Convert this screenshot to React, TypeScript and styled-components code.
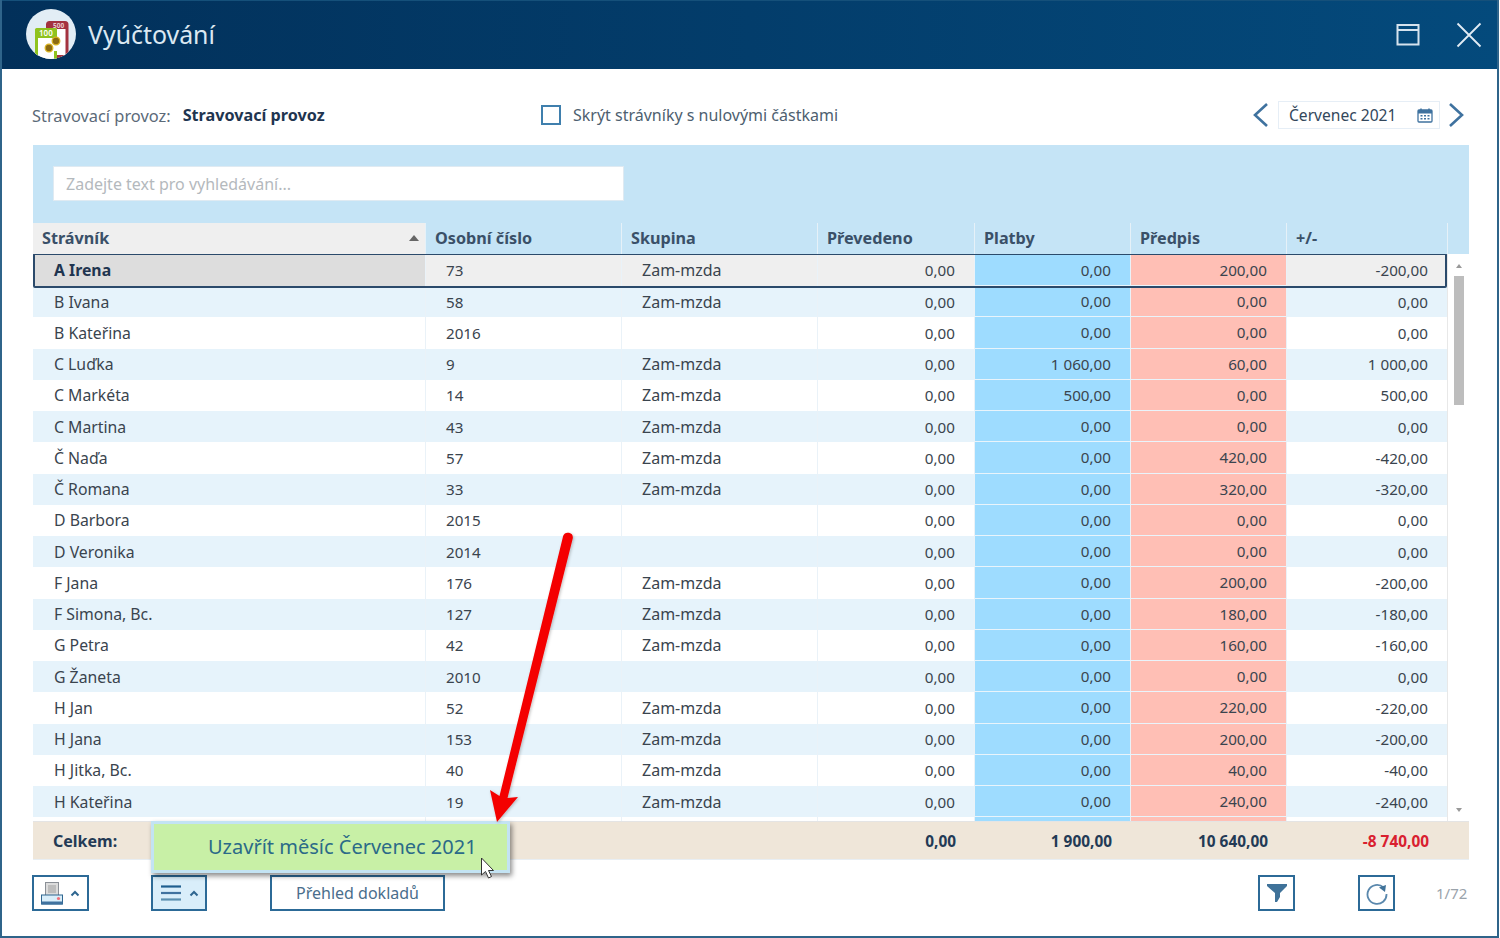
import React from 'react';
import styled, { createGlobalStyle } from 'styled-components';

const Global = createGlobalStyle`
  html, body { margin: 0; padding: 0; background: #fff; }
  body { font-family: "Noto Sans", "Open Sans", "Liberation Sans", sans-serif; font-size: 16px; color: #33475b; }
  * { box-sizing: border-box; }
`;

const COLS = '392px 196px 196px 157px 156px 156px 161px';

const Win = styled.div`
  position: relative;
  width: 1499px;
  height: 938px;
  border: 2px solid #2f648a;
  border-top: none;
  background: #fff;
  display: flex;
  flex-direction: column;
  overflow: hidden;
`;
const TitleBar = styled.header`
  height: 69px;
  flex: none;
  display: flex;
  align-items: center;
  padding: 0 13px 0 24px;
  background: linear-gradient(90deg, #02305a 0%, #044a7c 100%);
  border-top: 1px solid #15507a;
`;
const Logo = styled.svg`
  width: 50px;
  height: 50px;
  flex: none;
  margin-top: -2px;
`;
const Title = styled.h1`
  margin: 0 0 2px 12px;
  font-size: 24.9px;
  font-weight: 400;
  color: #dbe8f2;
  flex: 1;
`;
const WinBtn = styled.svg`
  width: 30px;
  height: 30px;
  margin-left: 31px;
  flex: none;
`;
const Content = styled.main`
  flex: 1;
  display: flex;
  flex-direction: column;
  padding: 0 28px 0 31px;
  min-height: 0;
`;
const Toolbar = styled.div`
  height: 76px;
  flex: none;
  display: grid;
  grid-template-columns: 509px 1fr auto;
  align-items: center;
  padding-top: 16px;
  padding-right: 4px;
  margin-left: -1px;
`;
const Provider = styled.div`
  display: flex;
  gap: 12px;
  color: #5b6a78;
  font-size: 16.4px;
`;
const ProviderName = styled.b`
  color: #1f3550;
  font-weight: 700;
  font-size: 16.2px;
`;
const CheckLabel = styled.label`
  display: flex;
  align-items: center;
  gap: 12px;
  color: #4e5f70;
`;
const CheckBox = styled.span`
  width: 20px;
  height: 20px;
  border: 2px solid #3f7fad;
  background: #fff;
`;
const DateNav = styled.div`
  display: flex;
  align-items: center;
  gap: 7px;
`;
const Chevron = styled.svg`
  width: 18px;
  height: 28px;
  flex: none;
`;
const BackChevron = styled(Chevron)`
  margin-right: 1px;
`;
const DateBox = styled.div`
  width: 162px;
  height: 28px;
  border: 1px solid #e6eef6;
  background: #fff;
  display: flex;
  align-items: center;
  justify-content: space-between;
  padding: 0 6px 0 10px;
  color: #33475b;
  font-size: 15.6px;
`;
const SearchPanel = styled.div`
  height: 78px;
  flex: none;
  background: #c5e4f6;
  padding: 22px 20px;
`;
const SearchInput = styled.input`
  display: block;
  width: 571px;
  height: 35px;
  margin-top: -1px;
  border: 1px solid #dfeaf2;
  background: #fff;
  padding: 0 12px;
  font: inherit;
  &::placeholder { color: #b4b9bd; opacity: 1; }
`;
const HeadRow = styled.div`
  display: grid;
  grid-template-columns: ${COLS} 22px;
  height: 30.5px;
  flex: none;
  background: #c5e4f6;
`;
const HeadCell = styled.div<{ $sorted?: boolean }>`
  display: flex;
  align-items: center;
  justify-content: space-between;
  padding: 0 10px 0 9px;
  font-weight: 700;
  font-size: 16.2px;
  color: #3a5068;
  border-left: 1px solid #e6f1f8;
  background: ${p => (p.$sorted ? '#efefef' : 'transparent')};
  &:first-child { border-left: none; padding-left: 9px; }
`;
const SortMark = styled.span`
  width: 0;
  height: 0;
  border-left: 5px solid transparent;
  border-right: 5px solid transparent;
  border-bottom: 6px solid #666;
  margin-right: -4px;
`;
const BodyWrap = styled.div`
  height: 567.5px;
  flex: none;
  display: flex;
  overflow: hidden;
  background: #fff;
`;
const Rows = styled.div`
  width: 1414px;
  flex: none;
  padding-top: 1.25px;
`;
const Row = styled.div<{ $alt: boolean; $selected?: boolean }>`
  position: relative;
  display: grid;
  grid-template-columns: ${COLS};
  height: 31.25px;
  background: ${p => (p.$selected ? '#efefef' : p.$alt ? '#e6f3fb' : '#fff')};
  ${p => p.$selected && `
    z-index: 1;
    &::after {
      content: '';
      position: absolute;
      inset: -1.500px 0 -1.500px 0;
      border: 2.500px solid #2b4a6b;
      border-radius: 2px;
      pointer-events: none;
    }
  `}
`;
const Cell = styled.div<{ $kind?: 'name' | 'pay' | 'due' | 'group'; $right?: boolean; $selected?: boolean }>`
  display: flex;
  align-items: center;
  justify-content: ${p => (p.$right ? 'flex-end' : 'flex-start')};
  padding: ${p => (p.$right ? '0 19px 0 0' : '0 0 0 20px')};
  color: #3a444e;
  white-space: nowrap;
  font-size: ${p => (p.$kind === 'name' ? 15.8 : p.$kind === 'group' ? 16 : 15.2)}px;
  border-left: 1px solid #eaf2f8;
  border-bottom: ${p => (p.$kind === 'pay' || p.$kind === 'due' ? '1px solid #e9f4fb' : 'none')};
  &:first-child { border-left: none; padding-left: 21px; }
  background: ${p => {
    if (p.$kind === 'pay') return '#9edcff';
    if (p.$kind === 'due') return '#ffbfb5';
    if (p.$kind === 'name' && p.$selected) return '#dddddd';
    return 'transparent';
  }};
  font-weight: ${p => (p.$kind === 'name' && p.$selected ? 700 : 400)};
  ${p => p.$kind === 'name' && p.$selected && 'color: #1f3550;'}
`;
const Scrollbar = styled.div`
  width: 22px;
  flex: none;
  display: flex;
  flex-direction: column;
  align-items: center;
  padding: 10px 0 6px 1px;
  border-left: 1px solid #e8e8e8;
`;
const ScrollUp = styled.span`
  width: 0;
  height: 0;
  border-left: 3px solid transparent;
  border-right: 3px solid transparent;
  border-bottom: 4px solid #999;
`;
const ScrollDown = styled.span`
  width: 0;
  height: 0;
  margin-top: auto;
  margin-bottom: 3px;
  border-left: 3px solid transparent;
  border-right: 3px solid transparent;
  border-top: 4px solid #999;
`;
const ScrollThumb = styled.div`
  width: 10px;
  height: 129px;
  margin-top: 8px;
  background: #bdbdbd;
`;
const TotalRow = styled.div`
  display: grid;
  grid-template-columns: ${COLS} 22px;
  height: 39px;
  flex: none;
  padding-top: 1px;
  background: #efe6d9;
  border-bottom: 1px solid #e8eef3;
  border-top: 1px solid #e4e4e4;
  font-weight: 700;
  font-size: 15.4px;
  color: #233a55;
`;
const TotalCell = styled.div<{ $first?: boolean; $negative?: boolean }>`
  display: flex;
  align-items: center;
  justify-content: ${p => (p.$first ? 'flex-start' : 'flex-end')};
  padding: ${p => (p.$first ? '0 0 0 20px' : '0 18px 0 0')};
  font-size: ${p => (p.$first ? '16px' : 'inherit')};
  color: ${p => (p.$negative ? '#d9202f' : 'inherit')};
`;
const BottomBar = styled.div`
  display: flex;
  align-items: center;
  height: 36px;
  margin-top: 15px;
  margin-left: -1px;
  flex: none;
`;
const IconBtn = styled.button<{ $w: number; $active?: boolean; $gap?: number }>`
  width: ${p => p.$w}px;
  height: 36px;
  margin-left: ${p => p.$gap ?? 0}px;
  border: 2px solid #2c6a97;
  background: ${p => (p.$active ? '#d9eefa' : '#fff')};
  display: flex;
  align-items: center;
  justify-content: center;
  gap: 7px;
  padding: 0;
  flex: none;
`;
const TextBtn = styled.button`
  width: 175px;
  height: 36px;
  margin-left: 63px;
  border: 2px solid #2c6a97;
  background: #fff;
  font: inherit;
  color: #4a6e8c;
  padding: 0;
  flex: none;
`;
const Spacer = styled.div`
  flex: 1;
`;
const Pager = styled.span`
  margin-left: 41px;
  width: 33px;
  color: #9aa3ab;
  font-size: 15px;
  white-space: nowrap;
`;
const Popup = styled.div`
  position: absolute;
  left: 149px;
  top: 821px;
  width: 359px;
  height: 52px;
  background: #c8f0a6;
  border: 3px solid #c3e3f3;
  box-shadow: 2px 3px 5px rgba(0, 0, 0, 0.45);
  display: flex;
  align-items: center;
  padding: 0 0 2px 54px;
  font-size: 20px;
  color: #2b6a88;
  white-space: nowrap;
`;
const Overlay = styled.svg`
  position: absolute;
  left: -2px;
  top: 0;
  width: 1500px;
  height: 938px;
  pointer-events: none;
`;

type R = [string, string, string, string, string, string];
const data: R[] = [
  ['A Irena', '73', 'Zam-mzda', '0,00', '200,00', '-200,00'],
  ['B Ivana', '58', 'Zam-mzda', '0,00', '0,00', '0,00'],
  ['B Kateřina', '2016', '', '0,00', '0,00', '0,00'],
  ['C Luďka', '9', 'Zam-mzda', '1 060,00', '60,00', '1 000,00'],
  ['C Markéta', '14', 'Zam-mzda', '500,00', '0,00', '500,00'],
  ['C Martina', '43', 'Zam-mzda', '0,00', '0,00', '0,00'],
  ['Č Naďa', '57', 'Zam-mzda', '0,00', '420,00', '-420,00'],
  ['Č Romana', '33', 'Zam-mzda', '0,00', '320,00', '-320,00'],
  ['D Barbora', '2015', '', '0,00', '0,00', '0,00'],
  ['D Veronika', '2014', '', '0,00', '0,00', '0,00'],
  ['F Jana', '176', 'Zam-mzda', '0,00', '200,00', '-200,00'],
  ['F Simona, Bc.', '127', 'Zam-mzda', '0,00', '180,00', '-180,00'],
  ['G Petra', '42', 'Zam-mzda', '0,00', '160,00', '-160,00'],
  ['G Žaneta', '2010', '', '0,00', '0,00', '0,00'],
  ['H Jan', '52', 'Zam-mzda', '0,00', '220,00', '-220,00'],
  ['H Jana', '153', 'Zam-mzda', '0,00', '200,00', '-200,00'],
  ['H Jitka, Bc.', '40', 'Zam-mzda', '0,00', '40,00', '-40,00'],
  ['H Kateřina', '19', 'Zam-mzda', '0,00', '240,00', '-240,00'],
];

const Caret = () => (
  <svg width="10" height="7" viewBox="0 0 10 7"><path d="M1.500 5.500 5 2l3.500 3.500" fill="none" stroke="#2f6690" strokeWidth="2" /></svg>
);

export default function App() {
  return (
    <>
      <Global />
      <Win>
        <TitleBar>
          <Logo viewBox="0 0 50 50">
            <defs>
              <clipPath id="logo-clip"><circle cx="25" cy="25" r="25" /></clipPath>
            </defs>
            <circle cx="25" cy="25" r="25" fill="#e2edf5" />
            <g clipPath="url(#logo-clip)">
              <rect x="21.500" y="13.500" width="19.500" height="34" rx="2" fill="#fff" stroke="#a3323f" strokeWidth="3" />
              <rect x="21" y="13" width="20" height="7" fill="#a3323f" />
              <text x="27" y="19" fontSize="6.500" fontWeight="700" fill="#e8c9cc">500</text>
              <rect x="9" y="19" width="22" height="34" rx="1.500" fill="#fff" />
              <rect x="9" y="19" width="22" height="10" rx="1.500" fill="#8fc31f" />
              <path d="M10.500 27v25M29.500 27v5M29.500 42v10" stroke="#8fc31f" strokeWidth="3" fill="none" />
              <text x="13" y="27" fontSize="8" fontWeight="600" fill="#fff">100</text>
              <circle cx="30" cy="32" r="3.800" fill="#8c6a10" stroke="#d9b21f" strokeWidth="1.300" />
              <circle cx="23" cy="39" r="3.800" fill="#8c6a10" stroke="#d9b21f" strokeWidth="1.300" />
            </g>
          </Logo>
          <Title>Vyúčtování</Title>
          <WinBtn viewBox="0 0 30 30">
            <path d="M4.500 5h21v19.500h-21zM4.500 10h21" fill="none" stroke="#d6e3ee" strokeWidth="2" />
          </WinBtn>
          <WinBtn viewBox="0 0 30 30">
            <path d="M3.500 3.500l23 23M26.500 3.500l-23 23" fill="none" stroke="#e2ecf4" strokeWidth="1.800" />
          </WinBtn>
        </TitleBar>
        <Content>
          <Toolbar>
            <Provider>
              <span>Stravovací provoz:</span>
              <ProviderName>Stravovací provoz</ProviderName>
            </Provider>
            <CheckLabel>
              <CheckBox />
              <span>Skrýt strávníky s nulovými částkami</span>
            </CheckLabel>
            <DateNav>
              <BackChevron viewBox="0 0 18 28">
                <path d="M15 3 3 14l12 11" fill="none" stroke="#3f729f" strokeWidth="2.600" />
              </BackChevron>
              <DateBox>
                <span>Červenec 2021</span>
                <svg width="16" height="16" viewBox="0 0 16 16">
                  <rect x="1" y="3" width="14" height="12" rx="1" fill="#fff" stroke="#3f729f" strokeWidth="1.300" />
                  <rect x="1" y="3" width="14" height="3.500" fill="#3f729f" />
                  <path d="M4 1.500v2.500M12 1.500v2.500" stroke="#3f729f" strokeWidth="1.500" />
                  <path d="M3.500 8h2v1.500h-2zM7 8h2v1.500H7zM10.500 8h2v1.500h-2zM3.500 11h2v1.500h-2zM7 11h2v1.500H7zM10.500 11h2v1.500h-2z" fill="#3f729f" />
                </svg>
              </DateBox>
              <Chevron viewBox="0 0 18 28">
                <path d="M3 3l12 11L3 25" fill="none" stroke="#3f729f" strokeWidth="2.600" />
              </Chevron>
            </DateNav>
          </Toolbar>
          <SearchPanel>
            <SearchInput placeholder="Zadejte text pro vyhledávání..." readOnly />
          </SearchPanel>
          <HeadRow>
            <HeadCell $sorted>Strávník<SortMark /></HeadCell>
            <HeadCell>Osobní číslo</HeadCell>
            <HeadCell>Skupina</HeadCell>
            <HeadCell>Převedeno</HeadCell>
            <HeadCell>Platby</HeadCell>
            <HeadCell>Předpis</HeadCell>
            <HeadCell>+/-</HeadCell>
            <HeadCell />
          </HeadRow>
          <BodyWrap>
            <Rows>
              {data.map((r, i) => (
                <Row key={r[0]} $alt={i % 2 === 1} $selected={i === 0}>
                  <Cell $kind="name" $selected={i === 0}>{r[0]}</Cell>
                  <Cell>{r[1]}</Cell>
                  <Cell $kind="group">{r[2]}</Cell>
                  <Cell $right>0,00</Cell>
                  <Cell $right $kind="pay">{r[3]}</Cell>
                  <Cell $right $kind="due">{r[4]}</Cell>
                  <Cell $right>{r[5]}</Cell>
                </Row>
              ))}
              <Row $alt={false}>
                <Cell />
                <Cell />
                <Cell />
                <Cell />
                <Cell $kind="pay" />
                <Cell $kind="due" />
                <Cell />
              </Row>
            </Rows>
            <Scrollbar>
              <ScrollUp />
              <ScrollThumb />
              <ScrollDown />
            </Scrollbar>
          </BodyWrap>
          <TotalRow>
            <TotalCell $first>Celkem:</TotalCell>
            <span />
            <span />
            <TotalCell>0,00</TotalCell>
            <TotalCell>1 900,00</TotalCell>
            <TotalCell>10 640,00</TotalCell>
            <TotalCell $negative>-8 740,00</TotalCell>
            <span />
          </TotalRow>
          <BottomBar>
            <IconBtn $w={57}>
              <svg width="22" height="23" viewBox="0 0 22 23">
                <rect x="4.500" y="0.500" width="13" height="13" fill="#dcdcdc" stroke="#8a8f96" strokeWidth="1" />
                <rect x="7" y="3" width="8" height="8" fill="#bdbdbd" />
                <rect x="0.500" y="13" width="21" height="9" fill="#d9eefa" stroke="#2f6690" strokeWidth="1" />
                <rect x="0.500" y="19.500" width="21" height="3" fill="#3f729f" />
                <circle cx="17.500" cy="16.500" r="1.600" fill="#f0707a" />
              </svg>
              <Caret />
            </IconBtn>
            <IconBtn $w={56} $gap={62} $active>
              <svg width="22" height="18" viewBox="0 0 22 18">
                <path d="M1 2.500h20" stroke="#1f5f8f" strokeWidth="2.200" />
                <path d="M1 9h20" stroke="#3f729f" strokeWidth="2.200" />
                <path d="M1 15.500h20" stroke="#5a8fb0" strokeWidth="2.200" />
              </svg>
              <Caret />
            </IconBtn>
            <TextBtn>Přehled dokladů</TextBtn>
            <Spacer />
            <IconBtn $w={37}>
              <svg width="22" height="22" viewBox="0 0 22 22">
                <path d="M1 2h20v2l-7 7v4l-3 5h-2v-9L1 4z" fill="#3f7299" />
              </svg>
            </IconBtn>
            <IconBtn $w={37} $gap={63}>
              <svg width="24" height="24" viewBox="0 0 24 24">
                <path d="M18.500 6.500A9.500 9.500 0 1 0 21.500 13" fill="none" stroke="#5a88ad" strokeWidth="1.800" />
                <path d="M14 6.500l7-2.500-1 7z" fill="#3f7299" />
              </svg>
            </IconBtn>
            <Pager>1/72</Pager>
          </BottomBar>
        </Content>
        <Popup>Uzavřít měsíc Červenec 2021</Popup>
        <Overlay viewBox="0 0 1500 938">
          <defs>
            <filter id="arrow-shadow" x="-20%" y="-5%" width="140%" height="110%">
              <feDropShadow dx="1" dy="1" stdDeviation="1.500" floodColor="#000" floodOpacity="0.25" />
            </filter>
          </defs>
          <path
            filter="url(#arrow-shadow)"
            d="M563.200 535.800A5 5 0 0 1 572.800 538.200L507.500 798 518 797 497 822 490 790 499.500 796z"
            fill="#f40000"
          />
          <path d="M481.500 858v17l4-3.500 3 6.500 3-1.500-3-6h5z" fill="#fff" stroke="#333" strokeWidth="1" />
        </Overlay>
      </Win>
    </>
  );
}
